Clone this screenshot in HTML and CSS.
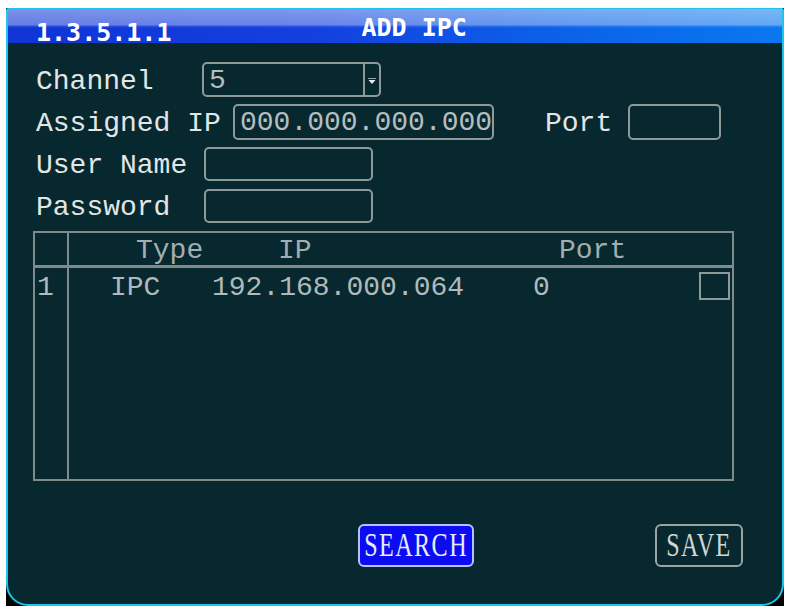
FILE: index.html
```html
<!DOCTYPE html>
<html>
<head>
<meta charset="utf-8">
<link rel="stylesheet" href="styles.css">
</head>
<body>
<div class="frame">
  <div class="panel">
    <div class="titlebar">
      <span class="crumb">1.3.5.1.1</span>
      <span class="title">ADD IPC</span>
    </div>
    <div class="form">
      <div class="row">
        <span class="lbl lbl-ch">Channel</span>
        <div class="select">
          <span class="val">5</span>
          <span class="drop">
            <svg width="10" height="10" viewBox="0 0 10 10"><path d="M1 3.5h8" stroke="#9aa6a6" stroke-width="1"/><path d="M1.5 5h7L5 9z" fill="#e8eeee"/></svg>
          </span>
        </div>
      </div>
      <div class="row">
        <span class="lbl lbl-ip">Assigned IP</span>
        <div class="field ip"><span class="val">000.000.000.000</span></div>
        <span class="lbl lbl-port">Port</span>
        <div class="field port"></div>
      </div>
      <div class="row">
        <span class="lbl lbl-user">User Name</span>
        <div class="field cred"></div>
      </div>
      <div class="row">
        <span class="lbl lbl-user">Password</span>
        <div class="field cred"></div>
      </div>
    </div>
    <div class="table">
      <div class="cell c1 head"></div>
      <div class="cell head h-type">Type</div>
      <div class="cell head h-ip">IP</div>
      <div class="cell head h-port">Port</div>
      <div class="cell head"></div>

      <div class="cell c1 r-no">1</div>
      <div class="cell r-type">IPC</div>
      <div class="cell r-ip">192.168.000.064</div>
      <div class="cell r-port">0</div>
      <div class="cell r-chk"><span class="chk"></span></div>

      <div class="cell c1"></div>
      <div class="cell"></div>
      <div class="cell"></div>
      <div class="cell"></div>
      <div class="cell"></div>
    </div>
    <div class="actions">
      <button class="btn search"><span class="btn-txt">SEARCH</span></button>
      <button class="btn save"><span class="btn-txt">SAVE</span></button>
    </div>
  </div>
</div>
</body>
</html>
```
FILE: styles.css
```css
html, body {
  margin: 0;
  padding: 0;
  background: #ffffff;
}

.frame {
  margin: 8px 0 0 6px;
  width: 778px;
  height: 598px;
  background: #000000;
}

.panel {
  box-sizing: border-box;
  width: 100%;
  height: 100%;
  border: 2px solid #1cc6e8;
  border-top-width: 1px;
  border-radius: 2px 2px 22px 22px;
  background: #082830;
  display: flex;
  flex-direction: column;
  overflow: hidden;
}

.titlebar {
  flex-shrink: 0;
  height: 34px;
  display: flex;
  align-items: flex-start;
  padding-left: 28px;
  background:
    linear-gradient(180deg, rgba(255, 255, 255, 0.46) 0%, rgba(255, 255, 255, 0.36) 46%, rgba(255, 255, 255, 0.08) 52%, rgba(255, 255, 255, 0) 56%),
    linear-gradient(90deg, #1034d6 0%, #1440e0 40%, #0c60e8 70%, #0a78f0 100%);
  color: #ffffff;
  font-family: "DejaVu Sans Mono", monospace;
  font-weight: bold;
  font-size: 25px;
  line-height: 25px;
}

.crumb {
  margin-top: 11px;
}

.title {
  margin-top: 6px;
  margin-left: 190px;
}

.form {
  padding: 19px 0 0 28px;
  display: grid;
  grid-auto-rows: 35px;
  row-gap: 7px;
}

.row {
  display: flex;
  align-items: center;
}

.lbl {
  padding-top: 5px;
  font-family: "Liberation Mono", monospace;
  font-size: 28px;
  line-height: 1;
  color: #e2e6e6;
  white-space: pre;
}

.lbl-ch { width: 166px; }
.lbl-ip { width: 197px; }
.lbl-port { width: 83px; margin-left: 51px; }
.lbl-user { width: 168px; }

.select,
.field {
  box-sizing: border-box;
  border: 2px solid #8e9a9a;
  border-radius: 5px;
  height: 100%;
  display: flex;
  align-items: center;
}

.select { width: 179px; }
.field.ip { width: 261px; height: 36px; }
.field.port { width: 93px; height: 36px; }
.field.cred { width: 169px; height: 34px; }

.val {
  flex: 1;
  padding-left: 5px;
  padding-top: 3px;
  font-family: "Liberation Mono", monospace;
  font-size: 28px;
  line-height: 1;
  color: #b4bebe;
  white-space: pre;
}

.drop {
  width: 14px;
  height: 100%;
  border-left: 2px solid #8e9a9a;
  display: flex;
  align-items: center;
  justify-content: center;
}

.table {
  box-sizing: border-box;
  margin: 8px 0 0 25px;
  width: 701px;
  height: 250px;
  border: 2px solid #7f8b8b;
  display: grid;
  grid-template-columns: 34px 137px 264px 222px 1fr;
  grid-template-rows: 35px 36px 1fr;
  font-family: "Liberation Mono", monospace;
  font-size: 28px;
  line-height: 1;
  color: #b0baba;
}

.cell {
  display: flex;
  align-items: center;
  white-space: pre;
}

.c1 { border-right: 2px solid #7f8b8b; }
.head { border-bottom: 3px solid #7f8b8b; color: #a4aeae; padding-top: 4px; }

.h-type { padding-left: 67px; }
.h-ip { padding-left: 72px; }
.h-port { padding-left: 89px; }

.r-no, .r-type, .r-ip, .r-port { padding-top: 4px; }
.r-no { padding-left: 2px; }
.r-type { padding-left: 41px; }
.r-ip { padding-left: 6px; }
.r-port { padding-left: 63px; }
.r-chk { padding-left: 7px; }

.chk {
  box-sizing: border-box;
  width: 31px;
  height: 28px;
  border: 2px solid #8e9a9a;
}

.actions {
  margin-top: 43px;
  padding-left: 350px;
  display: flex;
  height: 43px;
}

.btn {
  box-sizing: border-box;
  height: 43px;
  padding: 0;
  border-radius: 6px;
  display: flex;
  align-items: center;
  justify-content: center;
  font-family: "Liberation Serif", serif;
  font-size: 33px;
  line-height: 1;
}

.btn-txt {
  display: inline-block;
  letter-spacing: 2px;
  transform: scaleX(0.73);
}

.search {
  width: 116px;
  background: #0c0cf2;
  border: 2px solid #b8c0ff;
  color: #e8ecff;
}

.save {
  width: 88px;
  margin-left: 181px;
  background: transparent;
  border: 2px solid #9aa4a4;
  color: #d0d6d6;
}
```
